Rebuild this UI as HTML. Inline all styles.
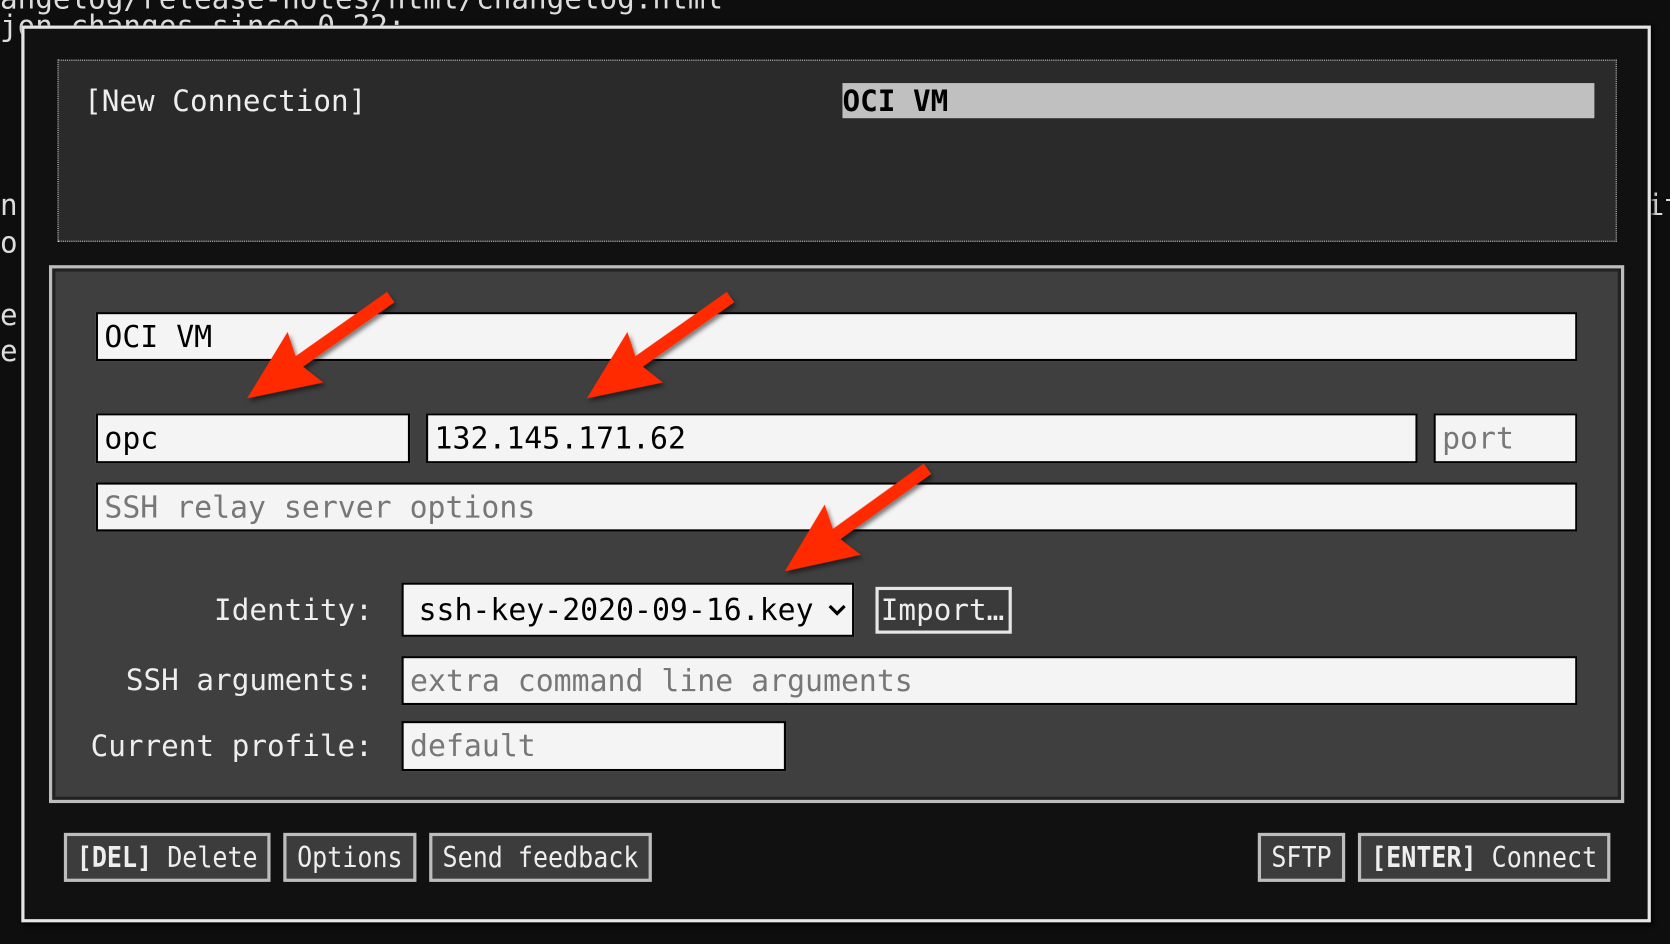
<!DOCTYPE html>
<html><head><meta charset="utf-8"><style>
html,body{margin:0;padding:0;background:#0e0e0e;overflow:hidden;width:1670px;height:944px}
#s{position:absolute;left:0;top:0;width:1568px;height:886px;transform:scale(1.06505);transform-origin:0 0;font-family:"DejaVu Sans Mono","Liberation Mono",monospace;font-size:27.5px;color:#eee}
.a{position:absolute;box-sizing:border-box}
.t{position:absolute;white-space:pre;line-height:1}
.in{position:absolute;box-sizing:border-box;background:#f4f4f4;border:2px solid #000;color:#000;padding-left:6px;white-space:pre;display:flex;align-items:center;font-size:28px}
.ph{color:#777}
.btn{position:absolute;box-sizing:border-box;background:#3c3c3c;border:3px solid #bdbdbd;color:#eee;white-space:pre;display:flex;align-items:center;justify-content:center;font-size:23.5px}
.btn span{display:inline-block;transform:scaleY(1.15)}
</style></head><body><div id="s">
<div class="t" style="left:0;top:-14px;color:#ddd">angelog/release-notes/html/changelog.html</div>
<div class="t" style="left:0;top:12px;color:#ddd">jon changes since 0.22:</div>
<div class="t" style="left:0;top:180px;color:#ddd">n</div>
<div class="t" style="left:0;top:215px;color:#ddd">o</div>
<div class="t" style="left:0;top:283px;color:#ddd">e</div>
<div class="t" style="left:0;top:317px;color:#ddd">e</div>
<div class="t" style="left:1546px;top:180px;color:#ddd">it</div>
<div class="a" style="left:20px;top:24px;width:1530px;height:842px;border:3px solid #e6e6e6;background:#111;box-shadow:2px 2px 4px #000"></div>
<div class="a" style="left:54px;top:56px;width:1464px;height:171px;border:1px dotted #ccc;background:#2a2a2a"></div>
<div class="t" style="left:79px;top:82px">[New Connection]</div>
<div class="a" style="left:791px;top:78px;width:706px;height:33px;background:#c0c0c0"></div>
<div class="t" style="left:791px;top:82px;color:#000;font-weight:bold">OCI VM</div>
<div class="a" style="left:46px;top:249px;width:1479px;height:505px;border:3px solid #bdbdbd;background:#222"></div>
<div class="a" style="left:52px;top:255px;width:1467px;height:493px;background:#3f3f3f"></div>
<div class="in" style="left:90px;top:293px;width:1391px;height:46px">OCI VM</div>
<div class="in" style="left:90px;top:388px;width:295px;height:47px">opc</div>
<div class="in" style="left:400px;top:388px;width:931px;height:47px">132.145.171.62</div>
<div class="in ph" style="left:1346px;top:388px;width:135px;height:47px">port</div>
<div class="in ph" style="left:90px;top:453px;width:1391px;height:46px">SSH relay server options</div>
<div class="t" style="left:0;width:350px;text-align:right;top:560px">Identity:</div>
<div class="in" style="left:377px;top:547px;width:425px;height:51px;padding-left:14px">ssh-key-2020-09-16.key</div>
<svg class="a" style="left:776px;top:566px" width="20" height="14" viewBox="0 0 20 14"><path d="M3 3 L10 10 L17 3" stroke="#000" stroke-width="3" fill="none"/></svg>
<div class="a" style="left:822px;top:551px;width:128px;height:44px;border:3px solid #e6e6e6;background:#3a3a3a"></div>
<div class="t" style="left:827px;top:560px">Import…</div>
<div class="t" style="left:0;width:350px;text-align:right;top:626px">SSH arguments:</div>
<div class="in ph" style="left:377px;top:616px;width:1104px;height:46px">extra command line arguments</div>
<div class="t" style="left:0;width:350px;text-align:right;top:688px">Current profile:</div>
<div class="in ph" style="left:377px;top:677px;width:361px;height:47px">default</div>
<div class="btn" style="left:60px;top:782px;width:194px;height:46px"><span><b>[DEL]</b> Delete</span></div>
<div class="btn" style="left:266px;top:782px;width:125px;height:46px"><span>Options</span></div>
<div class="btn" style="left:403px;top:782px;width:209px;height:46px"><span>Send feedback</span></div>
<div class="btn" style="left:1181px;top:782px;width:82px;height:46px"><span>SFTP</span></div>
<div class="btn" style="left:1275px;top:782px;width:237px;height:46px"><span><b>[ENTER]</b> Connect</span></div>
<svg class="a" style="left:0;top:0" width="1568" height="886" viewBox="0 0 1568 886">
<defs><filter id="sh"><feDropShadow dx="2" dy="3" stdDeviation="2" flood-color="#000" flood-opacity="0.5"/></filter>
<path id="ar" d="M0 -6 L105 -6 L98 -29 L165 0 L98 29 L105 6 L0 6 Z" fill="#ff2a00"/></defs>
<g filter="url(#sh)">
<use href="#ar" transform="translate(232,374) rotate(144.8) translate(-165,0)"/>
<use href="#ar" transform="translate(551,374) rotate(144.8) translate(-165,0)"/>
<use href="#ar" transform="translate(736,537) rotate(144.3) translate(-166,0)"/>
</g></svg>
</div></body></html>
